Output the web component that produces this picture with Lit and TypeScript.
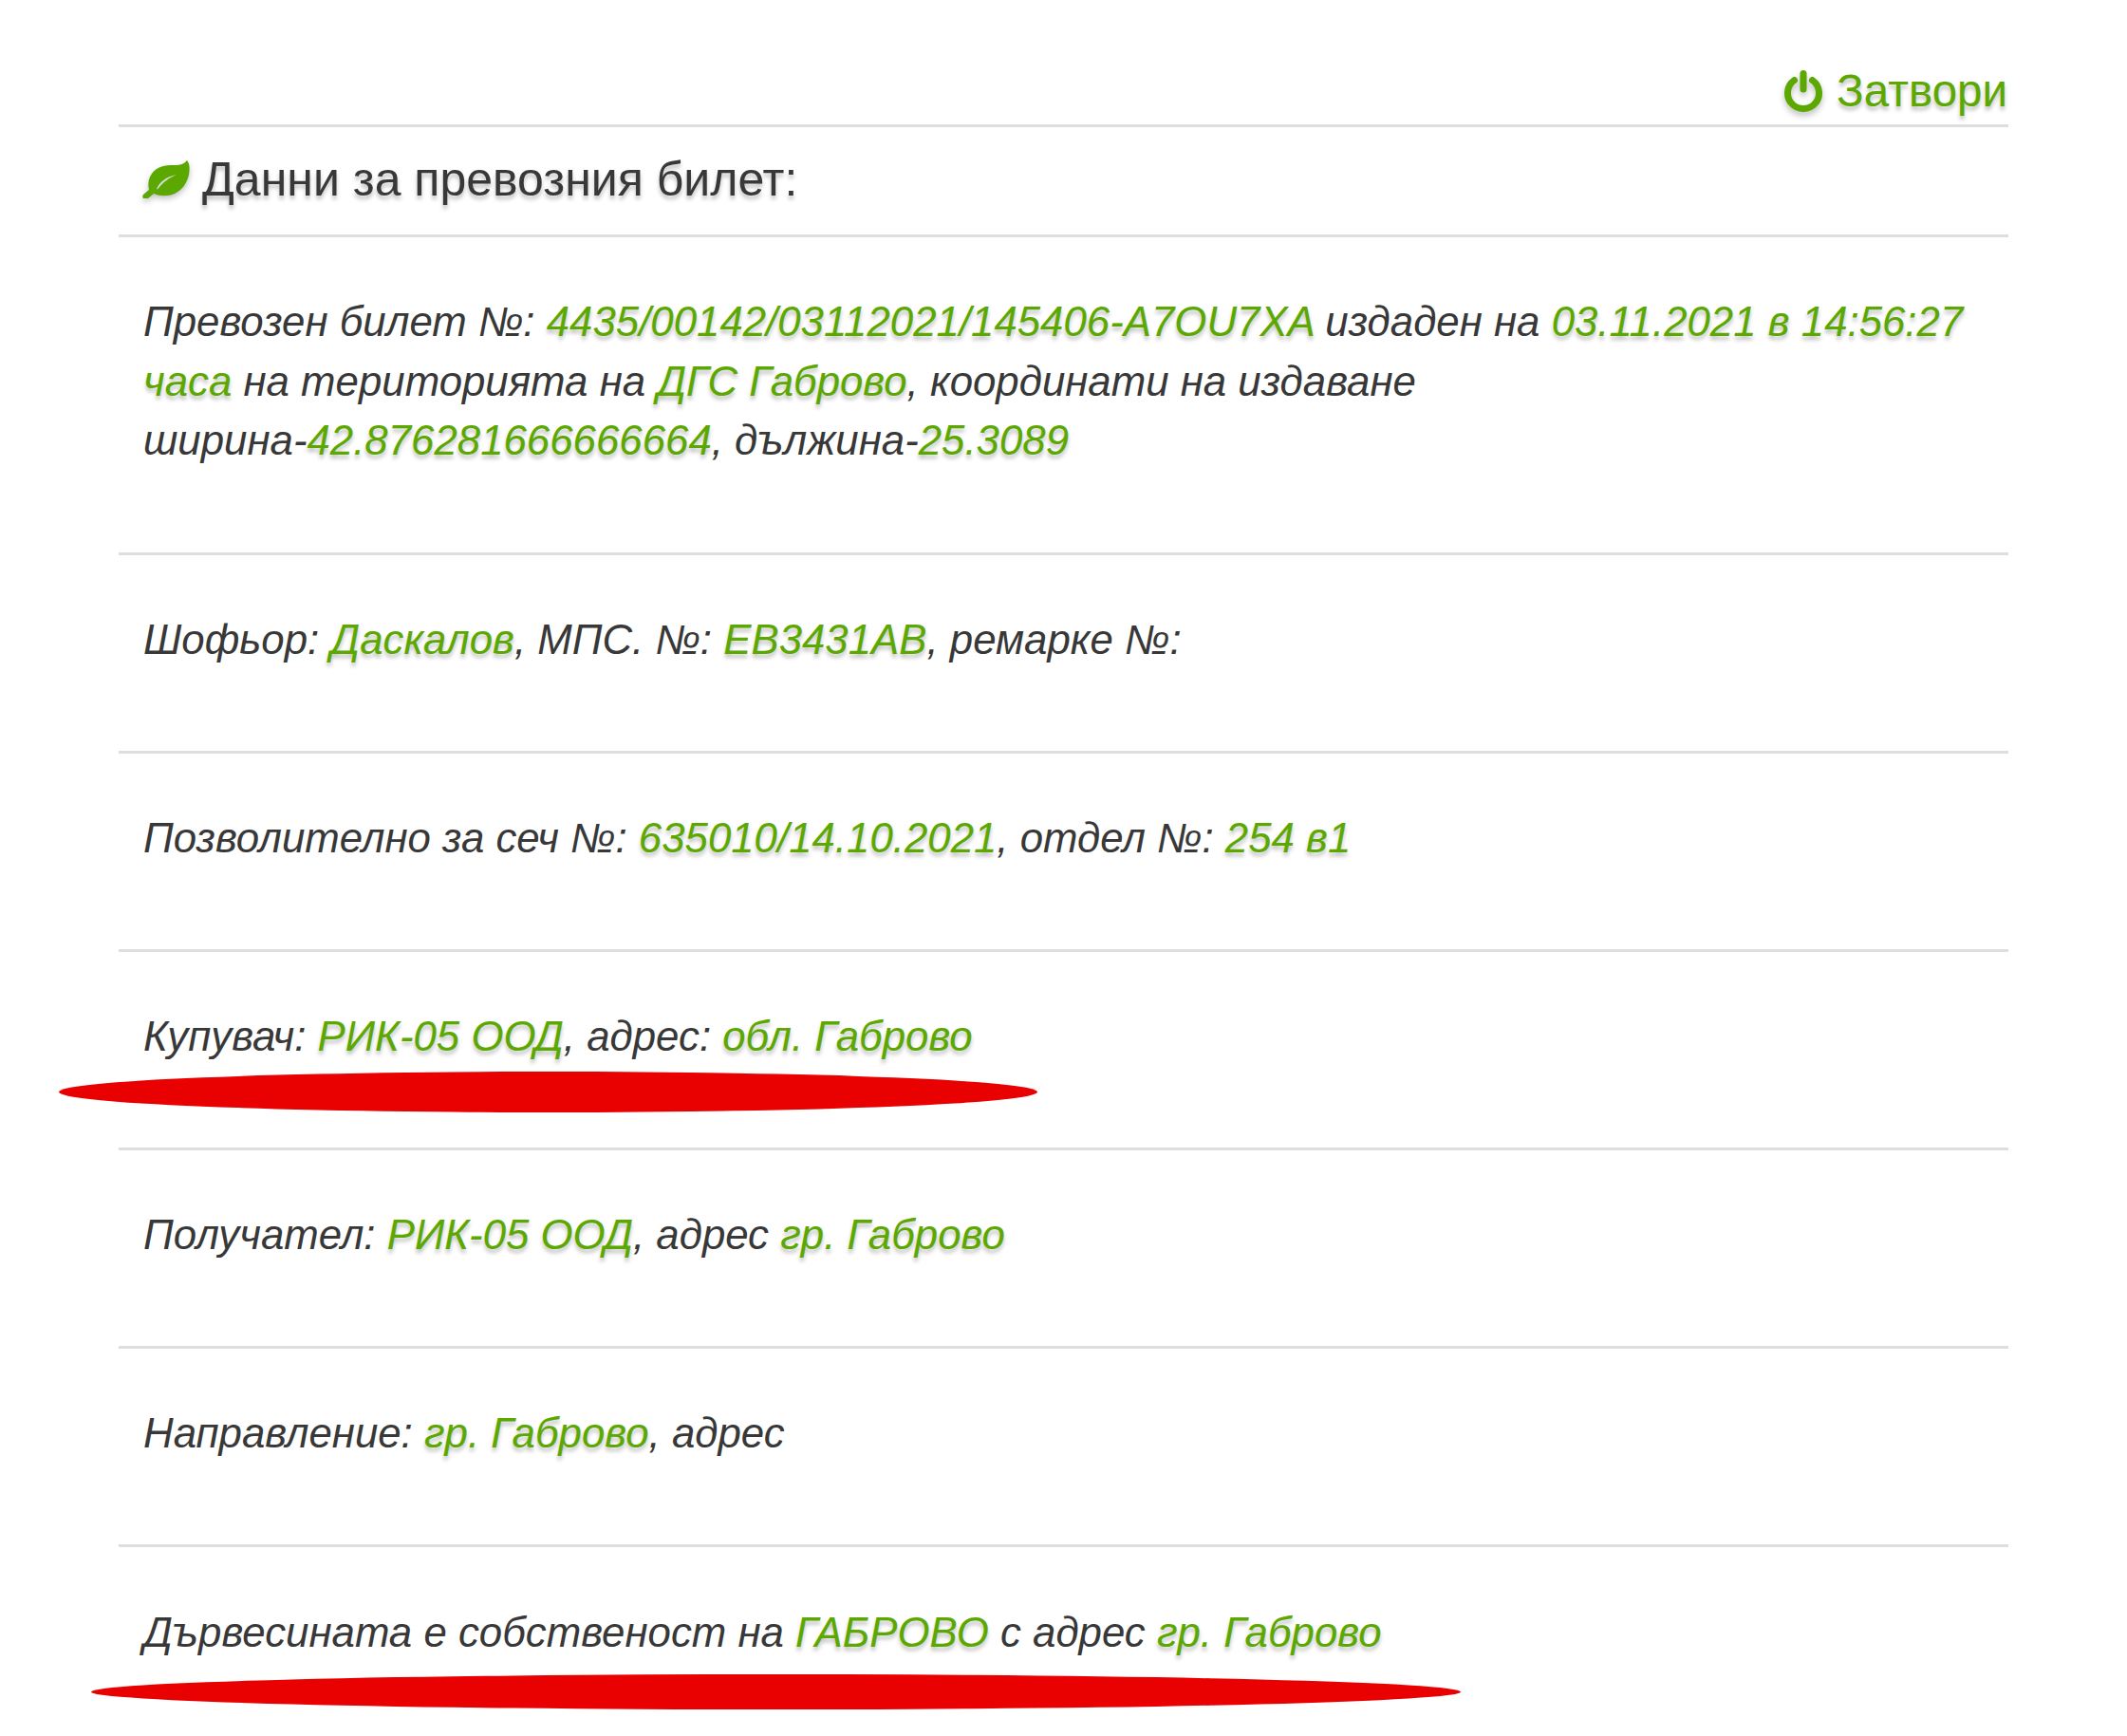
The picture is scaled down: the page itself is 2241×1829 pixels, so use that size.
import { LitElement, html, css } from "lit";
import { customElement } from "lit/decorators.js";

const g = (t: string) => html`<a class="v">${t}</a>`;

@customElement("app-root")
export class AppRoot extends LitElement {
  static styles = css`
    :host { display: block; background: #fff; height: 1829px; overflow: hidden; position: relative;
      font-family: "Liberation Sans", Arial, sans-serif; color: #383838; }
    .wrap { margin: 0 125px; }
    .top { height: 134px; box-sizing: border-box; padding: 61px 1px 0 0; display: flex; justify-content: flex-end; align-items: center; gap: 15px;
      color: #5aa800; font-size: 47.5px; line-height: 60px; text-shadow: 0 4px 4px rgba(0,0,0,.25); border-bottom: 3px solid #dedede; }
    .top svg { width: 40px; height: 44px; filter: drop-shadow(0 4px 3px rgba(0,0,0,.25)); }
    .head { height: 116px; box-sizing: border-box; border-bottom: 3px solid #dedede; display: flex; align-items: center; gap: 13px;
      padding: 0 0 3px 25px; font-size: 50px; text-shadow: 0 4px 4px rgba(0,0,0,.25); }
    .head svg { width: 50px; height: 40px; filter: drop-shadow(0 3px 3px rgba(0,0,0,.25)); }
    .row { position: relative; box-sizing: border-box; padding: 58px 26px 0 26px; border-bottom: 3px solid #dedede; height: 209px;
      font-style: italic; font-size: 43.8px; line-height: 62.5px; }
    .row.first { height: 335px; }
    .row.last { border-bottom: none; padding-top: 59px; }
    .v { color: #5aa800; text-shadow: 0 4px 4px rgba(0,0,0,.25); }
    .blot { position: absolute; background: #e90000; border-radius: 50%; }
    .b1 { left: -63px; top: 126px; width: 1031px; height: 43px; }
    .b2 { left: -29px; top: 134px; width: 1443px; height: 37px; }
  `;

  render() {
    return html`
      <div class="wrap">
        <div class="top">
          <svg viewBox="0 0 40 44" fill="none" stroke="#5aa800" stroke-linecap="round">
            <path d="M10.5 10.5 A16.5 16.5 0 1 0 29.5 10.5" stroke-width="7"/>
            <path d="M20 3.5 V20" stroke-width="7"/>
          </svg>
          <span>Затвори</span>
        </div>
        <div class="head">
          <svg viewBox="0 0 50 40">
            <path fill="#5aa800" d="M47 0c3 3 3 9 2 15-2 9-7 16-15 20-7 3-15 3-22 0l-6 5c-1 1-3 1-5 0-1-1-1-3 0-4l6-5C5 22 8 14 15 9c6-4 13-4 19-4 6 0 10-1 13-5z"/>
            <path fill="#dcdcdc" d="M15 30c3-7 10-13 21-15-9 4-14 8-18 13-1 2-4 3-3 2z"/>
          </svg>
          <span>Данни за превозния билет:</span>
        </div>
        <div class="row first">
          Превозен билет №: ${g("4435/00142/03112021/145406-A7OU7XA")} издаден на ${g("03.11.2021 в 14:56:27 часа")} на територията на ${g("ДГС Габрово")}, координати на издаване<br />ширина-${g("42.876281666666664")}, дължина-${g("25.3089")}
        </div>
        <div class="row">Шофьор: ${g("Даскалов")}, МПС. №: ${g("ЕВ3431АВ")}, ремарке №:</div>
        <div class="row">Позволително за сеч №: ${g("635010/14.10.2021")}, отдел №: ${g("254 в1")}</div>
        <div class="row">Купувач: ${g("РИК-05 ООД")}, адрес: ${g("обл. Габрово")}<span class="blot b1"></span></div>
        <div class="row">Получател: ${g("РИК-05 ООД")}, адрес ${g("гр. Габрово")}</div>
        <div class="row">Направление: ${g("гр. Габрово")}, адрес</div>
        <div class="row last">Дървесината е собственост на ${g("ГАБРОВО")} с адрес ${g("гр. Габрово")}<span class="blot b2"></span></div>
      </div>
    `;
  }
}
